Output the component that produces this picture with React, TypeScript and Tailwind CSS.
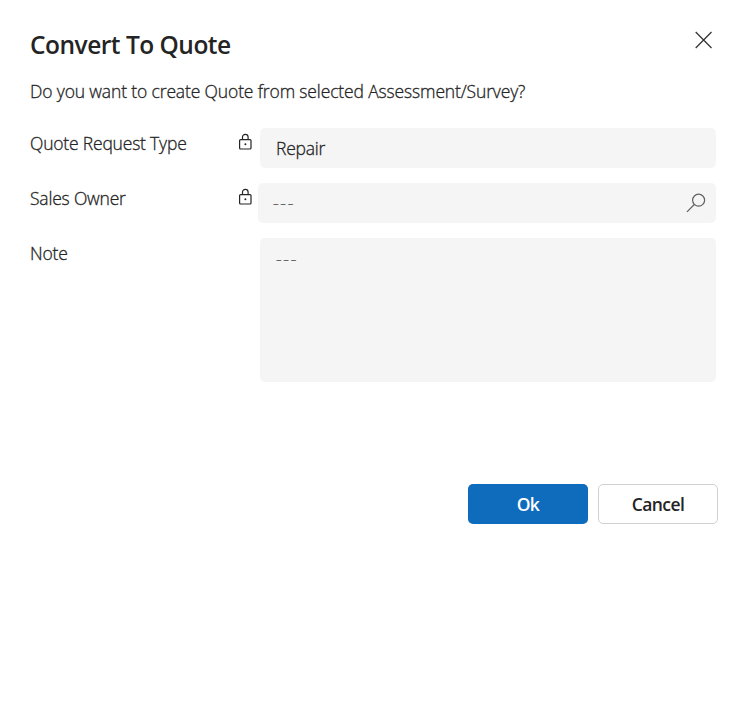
import type { ReactNode } from 'react';

function LockIcon() {
  return (
    <svg className="h-[18px] w-[16px]" viewBox="0 0 16 18" fill="none" stroke="#242424" strokeWidth="1.2" aria-hidden="true">
      <rect x="2.6" y="6.6" width="11.4" height="9.4" rx="1" />
      <path d="M5.5 6.5V4.1a2.8 2.8 0 0 1 5.6 0v2.4" />
      <circle cx="8.4" cy="11.2" r="1" fill="#242424" stroke="none" />
    </svg>
  );
}

function Row({ label, locked, children }: { label: string; locked?: boolean; children: ReactNode }) {
  return (
    <div className="flex items-start">
      <div className="flex w-[207px] shrink-0 pt-[3px] text-[17.5px] leading-6 tracking-[-0.2px] [-webkit-text-stroke:0.3px_#242424]">{label}</div>
      <div className="w-[21px] shrink-0 pt-[5px]">{locked && <LockIcon />}</div>
      <div className="flex flex-1 justify-end">{children}</div>
    </div>
  );
}

export default function App() {
  return (
    <div
      role="dialog"
      className="h-[728px] w-[754px] bg-white pt-[28px] pr-[38px] pl-[30px] font-['Open_Sans','Noto_Sans',sans-serif] font-light text-[#242424]"
    >
      <header className="flex items-start justify-between">
        <h1 className="text-[24.5px] leading-[34px] font-semibold tracking-[-0.5px] whitespace-nowrap">Convert To Quote</h1>
        <button aria-label="Close" className="mt-[3px] mr-[3px]">
          <svg className="h-[18px] w-[18px]" viewBox="0 0 18 18" fill="none" stroke="#333" strokeWidth="1.25">
            <path d="M.7 1l15.8 16M16.5 1L.7 17" />
          </svg>
        </button>
      </header>
      <p className="mt-[17px] text-[17.5px] leading-6 tracking-[-0.14px] whitespace-nowrap [-webkit-text-stroke:0.3px_#242424]">
        Do you want to create Quote from selected Assessment/Survey?
      </p>
      <div className="mt-[25px] flex flex-col gap-[15px]">
        <Row label="Quote Request Type" locked>
          <div className="h-10 w-[456px] rounded-[5px] bg-[#f5f5f5] px-4 text-[17.5px] leading-10 tracking-[-0.25px] [-webkit-text-stroke:0.3px_#242424]">Repair</div>
        </Row>
        <Row label="Sales Owner" locked>
          <div className="flex h-10 w-[458px] items-center justify-between rounded-[5px] bg-[#f5f5f5] pr-[10px] pl-[15px] text-[17.5px] text-[#616161]">
            <span className="tracking-[1.7px] [-webkit-text-stroke:0.3px_#616161]">---</span>
            <svg className="h-5 w-5" viewBox="0 0 20 20" fill="none" stroke="#616161" strokeWidth="1.2" aria-hidden="true">
              <circle cx="12.6" cy="7.2" r="6" />
              <path d="M8.3 11.5L1 18.8" />
            </svg>
          </div>
        </Row>
        <Row label="Note">
          <div className="h-36 w-[456px] rounded-[5px] bg-[#f5f5f5] px-4 pt-[9px] text-[17.5px] leading-6 tracking-[1.7px] text-[#616161] [-webkit-text-stroke:0.3px_#616161]">---</div>
        </Row>
      </div>
      <footer className="mt-[102px] -mr-[2px] flex justify-end gap-[10px] text-[17.5px] font-semibold tracking-[-0.55px]">
        <button className="h-10 w-[120px] rounded-[5px] bg-[#0f6cbd] text-white">Ok</button>
        <button className="h-10 w-[120px] rounded-[5px] border border-[#d1d1d1] bg-white">Cancel</button>
      </footer>
    </div>
  );
}
